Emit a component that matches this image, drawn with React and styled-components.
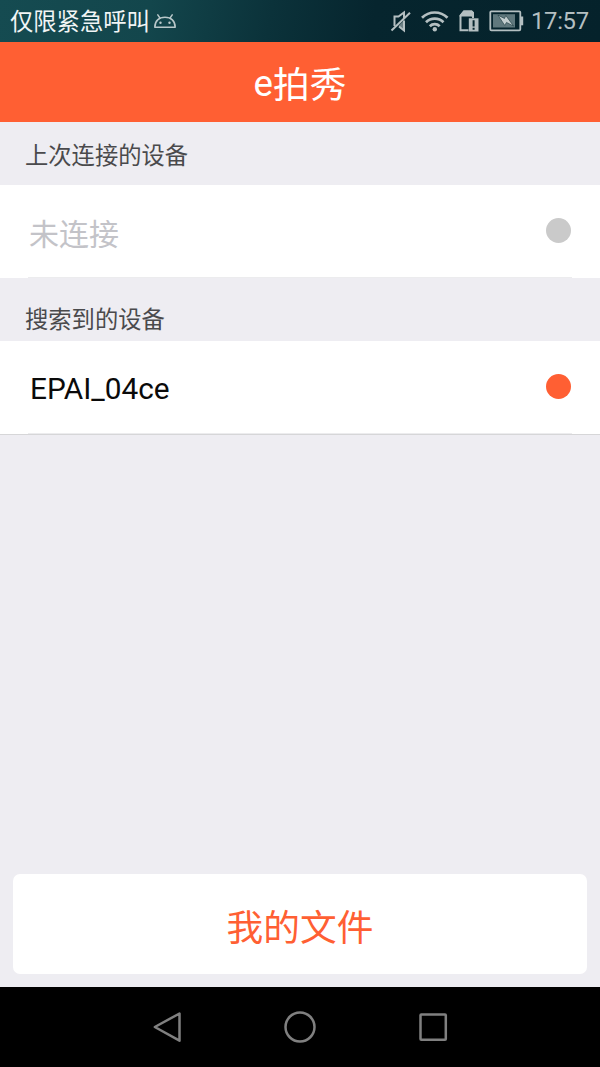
import styled, { createGlobalStyle } from 'styled-components';

const GlobalStyles = createGlobalStyle`
	* {
		box-sizing: border-box;
	}

	body {
		margin: 0;
		font-family: Roboto, 'Noto Sans CJK SC', sans-serif;
		background: #eeedf2;
	}
`;

const Screen = styled.div`
	width: 600px;
	height: 1067px;
	display: flex;
	flex-direction: column;
	overflow: hidden;
	background: #eeedf2;
`;

const StatusBarStyles = styled.div`
	flex: none;
	height: 41.5px;
	padding: 0 11px 0 10px;
	display: flex;
	align-items: center;
	justify-content: space-between;
	background: linear-gradient(100deg, #154b51 0%, #13464c 25%, #0b323a 45%, #06252e 62%, #05222b 100%);

	.carrier {
		display: flex;
		align-items: center;
		font-size: 23.3px;
		line-height: 40px;
		color: #f1f5f5;
	}

	.carrier span {
		padding-top: 2px;
	}

	.icons {
		display: flex;
		align-items: center;
	}

	svg {
		display: block;
		flex: none;
	}
`;

const StatusIcons = styled.div`
	display: grid;
	grid-template-columns: 30px 38px 30px 36px;
	align-items: center;
`;

const Clock = styled.span`
	width: 58px;
	margin-left: 7px;
	font-size: 23.8px;
	line-height: 46px;
	letter-spacing: -0.3px;
	color: #b4bfc1;
`;

const Header = styled.header`
	flex: none;
	height: 80px;
	font-size: 36.7px;
	line-height: 84px;
	text-align: center;
	color: #fff;
	background: #ff5f33;

	.han {
		line-height: 1;
		vertical-align: -2px;
	}
`;

const SectionLabel = styled.h2`
	flex: none;
	margin: 0;
	height: ${({ $height }) => $height}px;
	padding-left: 25px;
	font-size: 23.3px;
	font-weight: 400;
	line-height: ${({ $line }) => $line}px;
	color: #4a4a4c;
`;

const DeviceRow = styled.div`
	flex: none;
	height: ${({ $last }) => ($last ? 94 : 93.5)}px;
	border-bottom: ${({ $last }) => ($last ? '1px solid #d6d6d8' : 'none')};
	background: #fff;

	.content {
		height: 93px;
		margin: 0 28px;
		padding: 0 1px;
		display: flex;
		align-items: center;
		justify-content: space-between;
		border-bottom: 1px solid #ececee;
	}
`;

const DeviceName = styled.span`
	padding: ${({ $connected }) => ($connected ? '4px 0 0 1px' : '8px 0 0')};
	font-size: ${({ $connected }) => ($connected ? 29.8 : 30)}px;
	line-height: 40px;
	color: ${({ $connected }) => ($connected ? '#0a0a0a' : '#c3c3c8')};
`;

const Dot = styled.span`
	width: 25.500px;
	height: 25.500px;
	border-radius: 50%;
	background: ${({ $connected }) => ($connected ? '#ff5f33' : '#cacaca')};
`;

const FilesButton = styled.button`
	flex: none;
	height: 100px;
	margin: auto 13px 13.5px;
	padding: 2px 0 0;
	border: 0;
	border-radius: 7px;
	font-family: inherit;
	font-size: 36.7px;
	color: #ff5f33;
	background: #fff;
`;

const NavBar = styled.nav`
	flex: none;
	height: 80px;
	display: flex;
	align-items: center;
	justify-content: center;
	gap: 93px;
	background: #000;

	svg {
		display: block;
	}
`;

const AndroidSvg = styled.svg`
	margin-left: 3px;
`;

function AndroidIcon() {
	return (
		<AndroidSvg width="24" height="16" viewBox="0 0 24 16" fill="none" stroke="#b9c8ca" strokeWidth="1.5">
			<path d="M1.8 14.2C1.8 8 6 4.2 12 4.2s10.2 3.8 10.2 10z" strokeLinejoin="round" />
			<path d="M7 5.2L4.800 1.800M17 5.2L19.200 1.800" strokeLinecap="round" />
			<circle cx="7.5" cy="9.7" r="1.2" fill="#b9c8ca" stroke="none" />
			<circle cx="16.5" cy="9.7" r="1.2" fill="#b9c8ca" stroke="none" />
		</AndroidSvg>
	);
}

function MuteIcon() {
	return (
		<svg width="22" height="24" viewBox="0 0 22 24" fill="none" stroke="#b4bfc1" strokeWidth="2">
			<path d="M4.500 17V7.500H8.500L14 3.500V9" />
			<path d="M9 17.500L14 21.500V11.500" />
			<path d="M8.500 17L14 11.500V21z" fill="#b4bfc1" fillOpacity="0.6" stroke="none" />
			<path d="M1.500 21.500L20 3.800" />
		</svg>
	);
}

function WifiIcon() {
	return (
		<svg width="30" height="24" viewBox="0 0 30 24" fill="none" stroke="#b4bfc1" strokeWidth="2.7">
			<path d="M2 8.800a18 18 0 0 1 25.500 0" />
			<path d="M6 13.200a12.500 12.500 0 0 1 17.500 0" />
			<path d="M9.800 17.200a7 7 0 0 1 9.900 0" />
			<circle cx="14.800" cy="20.300" r="2.200" fill="#b4bfc1" stroke="none" />
		</svg>
	);
}

function SimAlertIcon() {
	return (
		<svg width="22" height="24" viewBox="0 0 22 24">
			<path d="M10.500 21.200H2.500V7L6 2.500h7.500L15 4v5" fill="none" stroke="#b4bfc1" strokeWidth="2" />
			<path d="M1.500 7.500V6.200L5.500 1.500H14l2 2v5H14.500l-1-1z" fill="#b4bfc1" />
			<path d="M10.800 9.300h9.700v13.200h-9.700z" fill="#b4bfc1" />
			<path d="M15.600 11.300v6.200M15.600 18.700v2.100" stroke="#08262e" strokeWidth="2" />
		</svg>
	);
}

function BatteryIcon() {
	return (
		<svg width="36" height="22" viewBox="0 0 36 22">
			<rect x="2.300" y="1.300" width="30" height="19" rx="1" fill="none" stroke="#b4bfc1" strokeWidth="1.800" />
			<rect x="5" y="4.200" width="22" height="13.300" fill="#60787d" />
			<path d="M33 6.500h2.200v8.800H33z" fill="#b4bfc1" />
			<path d="M10 5.200l6.500 3.300 1.300-3L25.500 16l-7-3.600-1.800 3z" fill="#c3cdce" stroke="#17353c" strokeWidth="0.600" />
		</svg>
	);
}

function StatusBar() {
	return (
		<StatusBarStyles>
			<div className="carrier">
				<span>仅限紧急呼叫</span>
				<AndroidIcon />
			</div>
			<div className="icons">
				<StatusIcons>
					<MuteIcon />
					<WifiIcon />
					<SimAlertIcon />
					<BatteryIcon />
				</StatusIcons>
				<Clock>17:57</Clock>
			</div>
		</StatusBarStyles>
	);
}

function Device({ name, connected, last }) {
	return (
		<DeviceRow $last={last}>
			<div className="content">
				<DeviceName $connected={connected}>{name}</DeviceName>
				<Dot $connected={connected} />
			</div>
		</DeviceRow>
	);
}

export default function App() {
	return (
		<Screen>
			<GlobalStyles />
			<StatusBar />
			<Header>
				e<span className="han">拍秀</span>
			</Header>
			<SectionLabel $height={63} $line={69}>
				上次连接的设备
			</SectionLabel>
			<Device name="未连接" />
			<SectionLabel $height={62.5} $line={85}>
				搜索到的设备
			</SectionLabel>
			<Device name="EPAI_04ce" connected last />
			<FilesButton>我的文件</FilesButton>
			<NavBar>
				<svg width="40" height="40" viewBox="0 0 40 40" fill="none" stroke="#808080" strokeWidth="2.5">
					<path d="M32.500 6.500v27.200L7.800 20z" strokeLinejoin="round" />
				</svg>
				<svg width="40" height="40" viewBox="0 0 40 40" fill="none" stroke="#808080" strokeWidth="2.5">
					<circle cx="20" cy="20" r="14.500" />
				</svg>
				<svg width="40" height="40" viewBox="0 0 40 40" fill="none" stroke="#808080" strokeWidth="2.5">
					<rect x="7.500" y="7.500" width="25.300" height="25.300" rx="0.800" />
				</svg>
			</NavBar>
		</Screen>
	);
}
